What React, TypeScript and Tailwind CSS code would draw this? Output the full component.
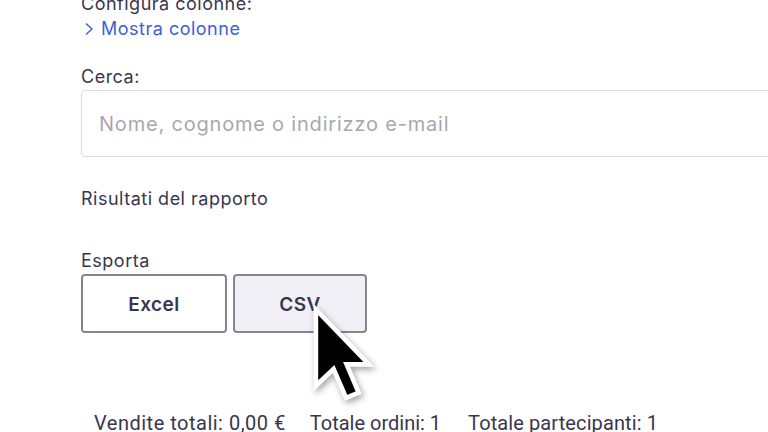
export default function App() {
  const font = { fontFamily: "Inter, 'Noto Sans', sans-serif" };
  return (
    <div className="relative w-[768px] h-[432px] overflow-hidden bg-white text-[#39364f]" style={font}>
      <div className="pl-[81px]">
        <div className="-mt-[8px] text-[18px] leading-[24px] tracking-[0.5px]">Configura colonne:</div>
        <div className="mt-[1px] flex items-center gap-[6px] text-[18px] leading-[24px] tracking-[0.5px] text-[#3d5ed8]">
          <svg width="12" height="14" viewBox="0 0 12 14" className="ml-[2px]">
            <path d="M3 1.5 L9 7 L3 12.5" fill="none" stroke="#3d5ed8" strokeWidth="1.4" />
          </svg>
          <span>Mostra colonne</span>
        </div>
        <div className="mt-[24px] text-[18px] leading-[24px] tracking-[0.5px]">Cerca:</div>
        <div className="mt-[1px] w-[760px] h-[67px] rounded-[4px] border border-[#dddce4] flex items-center px-[17px] text-[20px] tracking-[0.8px] text-[#a8a7b2]">
          Nome, cognome o indirizzo e-mail
        </div>
        <div className="mt-[30px] text-[18px] leading-[24px] tracking-[0.5px]">Risultati del rapporto</div>
        <div className="mt-[38px] text-[18px] leading-[24px] tracking-[0.5px]">Esporta</div>
        <div className="mt-[1px] flex gap-[6px]">
          <button className="w-[146px] h-[59px] pt-[3px] rounded-[4px] border-2 border-[#86848f] bg-white text-[19px] font-semibold tracking-[0.5px] text-[#39364f]">
            Excel
          </button>
          <button className="w-[134px] h-[59px] pt-[3px] rounded-[4px] border-2 border-[#86848f] bg-[#f0f0f6] text-[19px] font-semibold tracking-[0.5px] text-[#39364f]">
            CSV
          </button>
        </div>
        <div className="mt-[80px] ml-[13px] flex gap-[24px] text-[20px] leading-[20px]" style={{ fontFamily: "Roboto, sans-serif" }}>
          <span className="tracking-[0.5px]">Vendite totali: 0,00 €</span>
          <span className="tracking-[0px]">Totale ordini: 1</span>
          <span className="ml-[3px] tracking-[0.1px]">Totale partecipanti: 1</span>
        </div>
      </div>
      <svg
        className="absolute left-[308px] top-[302px] drop-shadow-[2px_3px_3px_rgba(0,0,0,0.35)]"
        width="66"
        height="100"
        viewBox="-1 -1 14 21.5"
      >
        <path
          d="M0.6 0.6 L0.6 17 L4.4 13.4 L7.1 19.6 L9.8 18.5 L7.2 12.4 L12 12.4 Z"
          fill="#000"
          stroke="#fff"
          strokeWidth="1"
          strokeLinejoin="miter"
        />
      </svg>
    </div>
  );
}
